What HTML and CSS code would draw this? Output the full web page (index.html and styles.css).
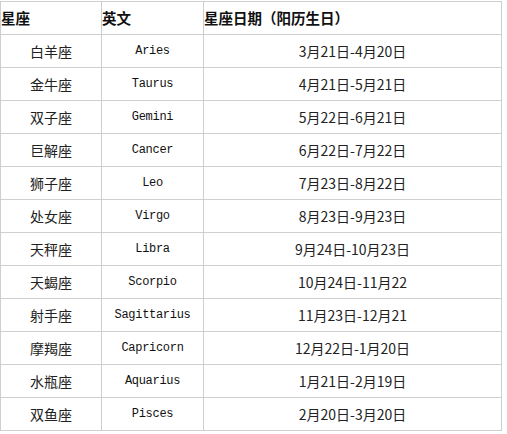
FILE: index.html
```html
<!DOCTYPE html>
<html lang="zh">
<head>
<meta charset="utf-8">
<link rel="stylesheet" href="styles.css">
</head>
<body>
<table class="zodiac">
  <colgroup><col class="c1"><col class="c2"><col class="c3"></colgroup>
  <thead>
    <tr><th>星座</th><th>英文</th><th>星座日期（阳历生日）</th></tr>
  </thead>
  <tbody>
    <tr><td>白羊座</td><td class="en">Aries</td><td>3月21日-4月20日</td></tr>
    <tr><td>金牛座</td><td class="en">Taurus</td><td>4月21日-5月21日</td></tr>
    <tr><td>双子座</td><td class="en">Gemini</td><td>5月22日-6月21日</td></tr>
    <tr><td>巨解座</td><td class="en">Cancer</td><td>6月22日-7月22日</td></tr>
    <tr><td>狮子座</td><td class="en">Leo</td><td>7月23日-8月22日</td></tr>
    <tr><td>处女座</td><td class="en">Virgo</td><td>8月23日-9月23日</td></tr>
    <tr><td>天秤座</td><td class="en">Libra</td><td>9月24日-10月23日</td></tr>
    <tr><td>天蝎座</td><td class="en">Scorpio</td><td>10月24日-11月22</td></tr>
    <tr><td>射手座</td><td class="en">Sagittarius</td><td>11月23日-12月21</td></tr>
    <tr><td>摩羯座</td><td class="en">Capricorn</td><td>12月22日-1月20日</td></tr>
    <tr><td>水瓶座</td><td class="en">Aquarius</td><td>1月21日-2月19日</td></tr>
    <tr><td>双鱼座</td><td class="en">Pisces</td><td>2月20日-3月20日</td></tr>
  </tbody>
</table>
</body>
</html>
```
FILE: styles.css
```css
html, body {
  margin: 0;
  padding: 0;
  background: #fff;
}
body {
  padding-top: 1px;
  font-family: "Noto Sans CJK SC", "Liberation Sans", sans-serif;
  color: #222;
}
.zodiac {
  border-collapse: collapse;
  table-layout: fixed;
  width: 501px;
  font-size: 14px;
}
.c1 { width: 101px; }
.c2 { width: 102px; }
.c3 { width: 298px; }
.zodiac th, .zodiac td {
  border: 1px solid #cfcfcf;
  padding: 0;
  height: 32px;
  line-height: 16px;
  vertical-align: middle;
}
.zodiac th {
  text-align: left;
  font-weight: bold;
  font-size: 14.5px;
  color: #111;
}
.zodiac td {
  text-align: center;
}
.zodiac td.en {
  font-family: "Liberation Mono", "DejaVu Sans Mono", monospace;
  font-size: 12px;
  letter-spacing: -0.3px;
  color: #111;
}
```
